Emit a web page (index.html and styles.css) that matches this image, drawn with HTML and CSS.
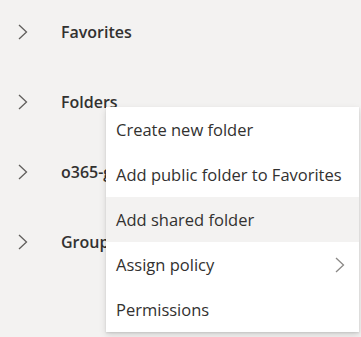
FILE: index.html
```html
<!DOCTYPE html>
<html lang="en">
<head>
    <meta charset="UTF-8">
    <meta name="viewport" content="width=device-width, initial-scale=1.0">
    <title>Folders</title>
    <link rel="stylesheet" href="styles.css">
</head>
<body>
    <ul class="tree">
        <li class="tree-row">
            <svg class="chevron" width="10" height="16" viewBox="0 0 10 16"><polyline points="1,1 8.5,8 1,15"/></svg>
            <span class="tree-label">Favorites</span>
        </li>
        <li class="tree-row">
            <svg class="chevron" width="10" height="16" viewBox="0 0 10 16"><polyline points="1,1 8.5,8 1,15"/></svg>
            <span class="tree-label">Folders</span>
        </li>
        <li class="tree-row">
            <svg class="chevron" width="10" height="16" viewBox="0 0 10 16"><polyline points="1,1 8.5,8 1,15"/></svg>
            <span class="tree-label covered">o365-groups</span>
        </li>
        <li class="tree-row">
            <svg class="chevron" width="10" height="16" viewBox="0 0 10 16"><polyline points="1,1 8.5,8 1,15"/></svg>
            <span class="tree-label covered">Groups</span>
        </li>
    </ul>

    <!-- menu contextual de Folders -->
    <ul class="menu">
        <li class="menu-item">Create new folder</li>
        <li class="menu-item">Add public folder to Favorites</li>
        <li class="menu-item hover">Add shared folder</li>
        <li class="menu-item">
            <span>Assign policy</span>
            <svg class="chevron sub" width="10" height="16" viewBox="0 0 10 16"><polyline points="1,1 8.5,8 1,15"/></svg>
        </li>
        <li class="menu-item">Permissions</li>
    </ul>
</body>
</html>
```

FILE: styles.css
```css
body {
    margin: 0;
    background: #f3f2f1;
    font-family: "Open Sans", "Noto Sans", sans-serif;
    color: #323130;
    height: 337px;
    overflow: hidden;
    position: relative;
}

.tree {
    list-style: none;
    margin: 0;
    padding: 0;
}
.tree-row {
    display: flex;
    align-items: center;
    height: 22px;
    padding: 21px 0 27px 18px;
}
.tree-label {
    margin-left: 33px;
    font-size: 16px;
    font-weight: 600;
    white-space: nowrap;
}
/* lo que queda debajo del menu */
.tree-label.covered {
    max-width: 45px;
    overflow: hidden;
}

.chevron polyline {
    fill: none;
    stroke: #605e5c;
    stroke-width: 1.3;
}

.menu {
    list-style: none;
    margin: 0;
    padding: 0;
    position: absolute;
    left: 106px;
    top: 107px;
    width: 253px;
    background: #fff;
    box-shadow: 0 3px 7px rgba(0, 0, 0, 0.13), 0 0.6px 1.8px rgba(0, 0, 0, 0.11);
}
.menu-item {
    display: flex;
    align-items: center;
    justify-content: space-between;
    height: 45px;
    padding: 0 14px 0 10px;
    font-size: 16.5px;
    white-space: nowrap;
}
.menu-item.hover {
    background: #f3f2f1;
}
.chevron.sub polyline {
    stroke: #8a8886;
}
```
